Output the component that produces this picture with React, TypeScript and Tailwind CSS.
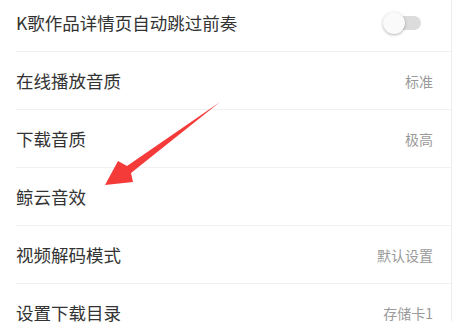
const font = { fontFamily: '"Noto Sans CJK SC", "Noto Sans", sans-serif' };

type Row = { label: string; value?: string; toggle?: boolean };

const rows: Row[] = [
  { label: 'K歌作品详情页自动跳过前奏', toggle: true },
  { label: '在线播放音质', value: '标准' },
  { label: '下载音质', value: '极高' },
  { label: '鲸云音效' },
  { label: '视频解码模式', value: '默认设置' },
  { label: '设置下载目录', value: '存储卡1' },
];

function Toggle() {
  return (
    <div className="relative w-[38px] h-[24px] flex items-center">
      <div className="absolute left-[2px] right-0 h-[14px] rounded-full bg-[#dcdcdc]" />
      <div className="absolute left-0 w-[22px] h-[22px] rounded-full bg-[#fafafa] shadow-[0_1px_3px_rgba(0,0,0,0.3)]" />
    </div>
  );
}

function Arrow() {
  return (
    <svg className="absolute left-0 top-0 pointer-events-none" width="455" height="327" viewBox="0 0 455 327">
      <polygon
        points="220,102 127,166 118,161 105,185 133,182 131,173"
        fill="#f53a3a"
      />
    </svg>
  );
}

export default function App() {
  return (
    <div className="relative w-[455px] h-[327px] overflow-hidden bg-white" style={font}>
      <div className="w-[452px] h-full border-r border-[#ececec] flex flex-col -mt-[6px]">
        {rows.map((row, i) => (
          <div key={row.label} className="flex flex-col">
            {i > 0 && <div className="ml-4 h-px bg-[#f1f1f1]" />}
            <div className="h-[57px] flex items-center justify-between pl-4 pr-[18px]">
              <span className="text-[17.5px] text-[#333333] leading-none">{row.label}</span>
              {row.toggle ? (
                <div className="mr-[12px]">
                  <Toggle />
                </div>
              ) : (
                row.value && <span className="text-[14px] text-[#9a9a9a] leading-none">{row.value}</span>
              )}
            </div>
          </div>
        ))}
      </div>
      <Arrow />
    </div>
  );
}
